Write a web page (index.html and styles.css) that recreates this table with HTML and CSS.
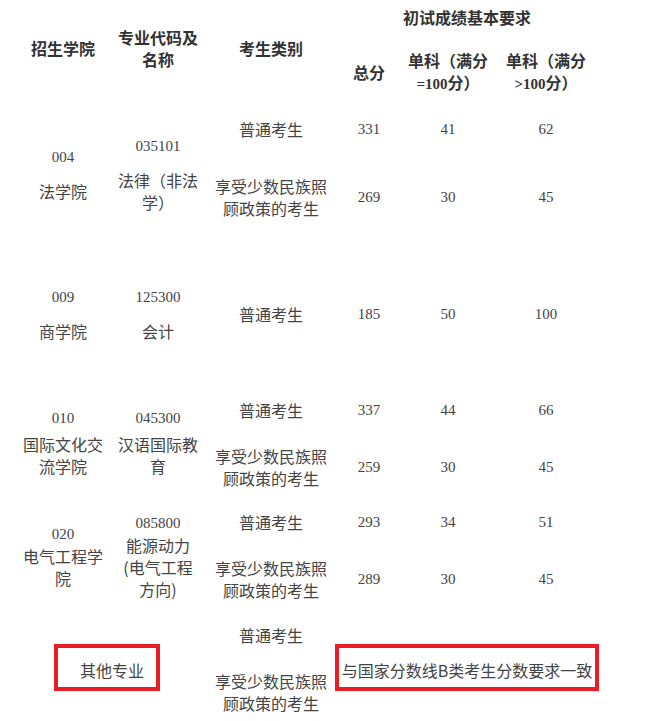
FILE: index.html
```html
<!DOCTYPE html>
<html lang="zh">
<head>
<meta charset="utf-8">
<title>初试成绩基本要求</title>
<link rel="stylesheet" href="styles.css">
</head>
<body>
<table class="score-table">
  <colgroup>
    <col class="c1"><col class="c2"><col class="c3"><col class="c4"><col class="c5"><col class="c6">
  </colgroup>
  <thead>
    <tr class="h1">
      <th rowspan="2" class="span-head">招生学院</th>
      <th rowspan="2" class="span-head">专业代码及<br>名称</th>
      <th rowspan="2" class="span-head">考生类别</th>
      <th colspan="3">初试成绩基本要求</th>
    </tr>
    <tr class="h2">
      <th class="sub-head">总分</th>
      <th class="sub-head">单科（满分<br><span class="n">=100</span>分）</th>
      <th class="sub-head">单科（满分<br><span class="n">&gt;100</span>分）</th>
    </tr>
  </thead>
  <tbody>
    <tr class="a1">
      <td rowspan="2"><div class="n">004</div><div class="name gap-l">法学院</div></td>
      <td rowspan="2"><div class="n">035101</div><div class="name gap-l">法律（非法<br>学）</div></td>
      <td>普通考生</td>
      <td class="n">331</td>
      <td class="n">41</td>
      <td class="n">62</td>
    </tr>
    <tr class="a2">
      <td>享受少数民族照<br>顾政策的考生</td>
      <td class="n">269</td>
      <td class="n">30</td>
      <td class="n">45</td>
    </tr>
    <tr class="b1">
      <td><div class="n">009</div><div class="name gap-l">商学院</div></td>
      <td><div class="n">125300</div><div class="name gap-l">会计</div></td>
      <td>普通考生</td>
      <td class="n">185</td>
      <td class="n">50</td>
      <td class="n">100</td>
    </tr>
    <tr class="c1r">
      <td rowspan="2"><div class="n">010</div><div class="name gap-s">国际文化交<br>流学院</div></td>
      <td rowspan="2"><div class="n">045300</div><div class="name gap-s">汉语国际教<br>育</div></td>
      <td>普通考生</td>
      <td class="n">337</td>
      <td class="n">44</td>
      <td class="n">66</td>
    </tr>
    <tr class="c2r">
      <td>享受少数民族照<br>顾政策的考生</td>
      <td class="n">259</td>
      <td class="n">30</td>
      <td class="n">45</td>
    </tr>
    <tr class="d1">
      <td rowspan="2"><div class="n">020</div><div class="name">电气工程学<br>院</div></td>
      <td rowspan="2"><div class="n">085800</div><div class="name">能源动力<br>(电气工程<br>方向)</div></td>
      <td>普通考生</td>
      <td class="n">293</td>
      <td class="n">34</td>
      <td class="n">51</td>
    </tr>
    <tr class="d2">
      <td>享受少数民族照<br>顾政策的考生</td>
      <td class="n">289</td>
      <td class="n">30</td>
      <td class="n">45</td>
    </tr>
    <tr class="e1">
      <td rowspan="2" colspan="2"><span class="mark mark-left">其他专业</span></td>
      <td>普通考生</td>
      <td rowspan="2" colspan="3"><div class="mark mark-right">与国家分数线B类考生分数要求一致</div></td>
    </tr>
    <tr class="e2">
      <td>享受少数民族照<br>顾政策的考生</td>
    </tr>
  </tbody>
</table>
</body>
</html>
```

FILE: styles.css
```css
html, body {
  margin: 0;
  padding: 0;
  background: #ffffff;
}

body {
  font-family: "Noto Sans CJK SC", "Microsoft YaHei", sans-serif;
  font-size: 16px;
  color: #444444;
}

.score-table {
  margin-left: 15px;
  border-collapse: collapse;
  border-spacing: 0;
  table-layout: fixed;
  width: 582px;
}

.c1 { width: 96px; }
.c2 { width: 94px; }
.c3 { width: 132px; }
.c4 { width: 64px; }
.c5 { width: 94px; }
.c6 { width: 102px; }

.score-table th,
.score-table td {
  padding: 0;
  text-align: center;
  vertical-align: middle;
  line-height: 22px;
  white-space: nowrap;
}

.score-table th {
  font-weight: bold;
  color: #333333;
}

.span-head {
  padding-bottom: 10px !important;
}

.sub-head {
  padding-top: 4px !important;
}

.n {
  font-family: "Liberation Serif", "Times New Roman", serif;
  font-size: 15px;
}

.name {
  font-family: "Noto Sans CJK SC", "Microsoft YaHei", sans-serif;
  font-size: 16px;
}

.gap-l { margin-top: 12px; }
.gap-s { margin-top: 4px; }

tr.h1 { height: 34px; }
tr.h2 { height: 72px; }
tr.a1 { height: 46px; }
tr.a2 { height: 90px; }
tr.b1 { height: 143px; }
tr.c1r { height: 49px; }
tr.c2r { height: 65px; }
tr.d1 { height: 46px; }
tr.d2 { height: 68px; }
tr.e1 { height: 44px; }
tr.e2 { height: 70px; }

.mark {
  border: 4px solid #ec1c24;
  box-sizing: border-box;
  height: 47px;
  padding-top: 11px;
  line-height: 22px;
  margin-bottom: 5px;
}

.mark-left {
  display: inline-block;
  padding-left: 22px;
  padding-right: 12px;
  margin-right: 6px;
}

.mark-right {
  margin-left: -2px;
  margin-right: -2px;
}
```
